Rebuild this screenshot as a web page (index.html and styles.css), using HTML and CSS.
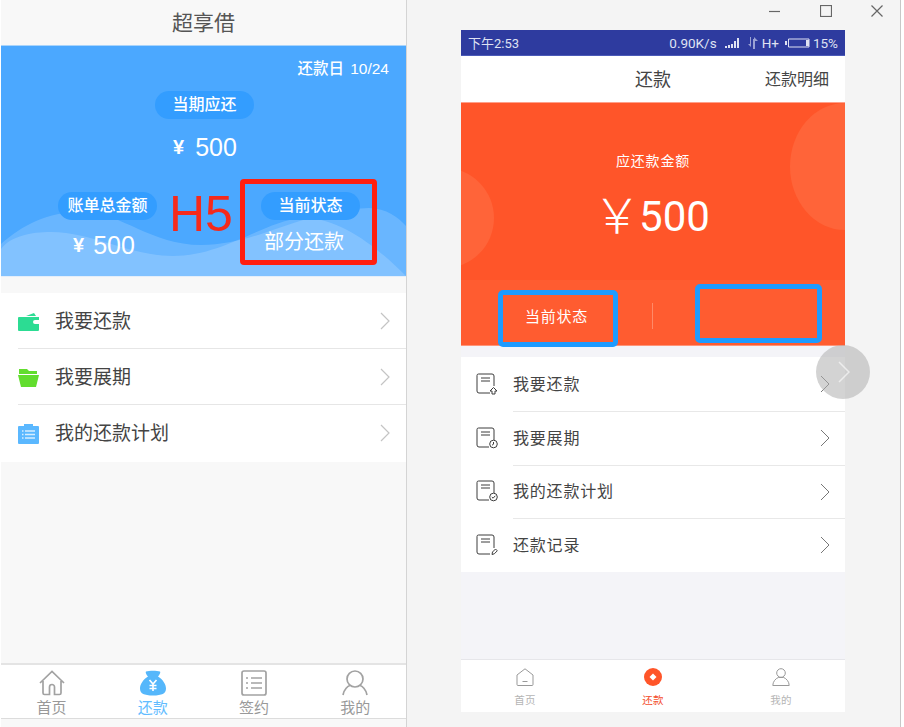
FILE: index.html
```html
<!DOCTYPE html>
<html lang="zh-CN">
<head>
<meta charset="utf-8">
<title>还款</title>
<link rel="stylesheet" href="styles.css">
</head>
<body>
<main class="compare">
  <section class="h5">
    <header class="h5-head">超享借</header>
    <div class="hero">
      <svg class="waves" viewBox="0 0 405 230" preserveAspectRatio="none" aria-hidden="true">
        <path class="wave" d="M0 198C22 178 50 165 82 166C122 167 150 199 200 199C258 199 300 164 368 162C385 162 398 172 405 180V230H0Z"/>
        <path class="wave" d="M0 203C10 190 30 186 50 186C90 186 130 210 172 210C222 210 262 176 300 172C340 170 380 205 405 230H0Z"/>
      </svg>
      <div class="hero-date">还款日 10/24</div>
      <div class="pill pill-main">当期应还</div>
      <div class="hero-amount"><span class="yen">¥</span>500</div>
      <div class="hero-row">
        <div class="hero-col">
          <div class="pill">账单总金额</div>
          <div class="sub-amount"><span class="yen yen-sub">¥</span>500</div>
        </div>
        <div class="hero-col hero-col-state">
          <div class="pill">当前状态</div>
          <div class="sub-state">部分还款</div>
        </div>
      </div>
    </div>
    <ul class="h5-list">
      <li class="h5-item">
        <svg class="h5-icon" viewBox="0 0 21 20"><path fill="#2cdc93" d="M1 5h20v3h-4a2 2 0 0 0 0 4h4v6a1 1 0 0 1-1 1H1a1 1 0 0 1-1-1V6a1 1 0 0 1 1-1zM8 4l8-3 2 3z"/></svg>
        <span class="h5-label">我要还款</span>
        <svg class="h5-chev" viewBox="0 0 10 18"><path d="M1 1l8 8-8 8"/></svg>
      </li>
      <li class="h5-item">
        <svg class="h5-icon" viewBox="0 0 21 20"><path fill="#62dd2e" d="M1 1h8l2 2h8v3H1zM0 7h21l-3 12H3z"/></svg>
        <span class="h5-label">我要展期</span>
        <svg class="h5-chev" viewBox="0 0 10 18"><path d="M1 1l8 8-8 8"/></svg>
      </li>
      <li class="h5-item">
        <svg class="h5-icon" viewBox="0 0 21 20"><path fill="#5bb8ff" d="M1 2h5V0h9v2h5a1 1 0 0 1 1 1v16a1 1 0 0 1-1 1H1a1 1 0 0 1-1-1V3a1 1 0 0 1 1-1z"/><path stroke="#d6edff" stroke-width="1.300" d="M7 7h10M7 10.500h10M7 14h10M4 7h1.500M4 10.500h1.500M4 14h1.500"/></svg>
        <span class="h5-label">我的还款计划</span>
        <svg class="h5-chev" viewBox="0 0 10 18"><path d="M1 1l8 8-8 8"/></svg>
      </li>
    </ul>
    <nav class="h5-tabs">
      <div class="h5-tab">
        <svg viewBox="0 0 26 26" class="h5-tabicon"><path d="M1 13L13 1.500 25 13M4 11v12a1.500 1.500 0 0 0 1.500 1.500h5V17a2.500 2.500 0 0 1 5 0v7.500h5A1.500 1.500 0 0 0 22 23V11"/></svg>
        <span>首页</span>
      </div>
      <div class="h5-tab h5-tab-on">
        <svg viewBox="0 0 26 26" class="h5-tabicon-fill"><path fill="#55b7fb" d="M6 1.500C9 .5 17 .5 20 1.500c1 1-1 4-2 5 5 3 8 8 8 12 0 5-4 7-13 7S0 23.500 0 18.500c0-4 3-9 8-12-1-1-3-4-2-5z"/><path stroke="#fff" stroke-width="1.600" fill="none" d="M9.500 10l3.500 4 3.500-4M13 14v7M9.500 15.500h7M9.500 18.500h7"/></svg>
        <span>还款</span>
      </div>
      <div class="h5-tab">
        <svg viewBox="0 0 26 26" class="h5-tabicon"><rect x="1" y="1" width="24" height="24" rx="2"/><path d="M10 8h11M10 13h11M10 18h11M5 8h2M5 13h2M5 18h2"/></svg>
        <span>签约</span>
      </div>
      <div class="h5-tab">
        <svg viewBox="0 0 26 26" class="h5-tabicon"><circle cx="13" cy="9" r="8"/><path d="M1 25c1-6 5-9 7-9.500M25 25c-1-6-5-9-7-9.500"/></svg>
        <span>我的</span>
      </div>
    </nav>
  </section>

  <section class="native">
    <div class="winbar">
      <svg class="winicon" viewBox="0 0 12 12"><path d="M0 6.500h11"/></svg>
      <svg class="winicon" viewBox="0 0 12 12"><rect x=".5" y=".5" width="11" height="11"/></svg>
      <svg class="winicon" viewBox="0 0 12 12"><path d="M.5.500l11 11M11.500.500l-11 11"/></svg>
    </div>
    <div class="phone">
      <div class="status">
        <span class="status-time">下午2:53</span>
        <span class="status-right">
          <span>0.90K/s</span>
          <svg class="sig" viewBox="0 0 16 10"><path d="M0 8h2v2H0zM3 7h2v3H3zM6 6h2v4H6zM9 3h2v7H9zM12 0h2v10h-2z"/></svg>
          <svg class="arrows" viewBox="0 0 10 12"><path d="M3 0v10L0 7h2V0zM5 2h1V0l4 4H7v8H5z"/></svg>
          <span>H+</span>
          <svg class="batt" viewBox="0 0 25 10"><path fill="none" stroke="#dfe2f2" d="M3.500 1h20.500v8H3.500z"/><path d="M0 3h2v4H0zM21 2h3v6h-3z"/></svg>
          <span>15%</span>
        </span>
      </div>
      <div class="navbar">
        <span class="nav-title">还款</span>
        <span class="nav-link">还款明细</span>
      </div>
      <div class="due">
        <i class="blob blob-r"></i>
        <i class="blob blob-l"></i>
        <div class="due-main">
          <div class="due-label">应还款金额</div>
          <div class="due-amount"><span class="due-yen">￥</span>500</div>
        </div>
        <div class="due-foot">
          <div class="due-cell">当前状态</div>
          <div class="due-cell due-cell-r"></div>
        </div>
      </div>
      <ul class="n-list">
        <li class="n-item">
          <svg class="n-icon" viewBox="0 0 22 22"><path d="M14 20H3a2 2 0 0 1-2-2V2.500A1.500 1.500 0 0 1 2.500 1H16a2 2 0 0 1 2 2v10M5 5h9M5 8h9"/><path d="M14 18l3.500-3.500L21 18h-2v3h-3v-3z"/></svg>
          <span class="n-label">我要还款</span>
          <svg class="n-chev" viewBox="0 0 10 18"><path d="M1 1l8 8-8 8"/></svg>
        </li>
        <li class="n-item">
          <svg class="n-icon" viewBox="0 0 22 22"><path d="M13 20H3a2 2 0 0 1-2-2V2.500A1.500 1.500 0 0 1 2.500 1H16a2 2 0 0 1 2 2v10M5 5h9M5 8h9"/><circle cx="17.500" cy="17" r="3.800"/><path d="M17.500 15v2.200l-1.500 1"/></svg>
          <span class="n-label">我要展期</span>
          <svg class="n-chev" viewBox="0 0 10 18"><path d="M1 1l8 8-8 8"/></svg>
        </li>
        <li class="n-item">
          <svg class="n-icon" viewBox="0 0 22 22"><path d="M13 20H3a2 2 0 0 1-2-2V2.500A1.500 1.500 0 0 1 2.500 1H16a2 2 0 0 1 2 2v10M5 5h9M5 8h9"/><circle cx="17.500" cy="17" r="3.800"/><path d="M15.800 17l1.300 1.200 2.200-2.400"/></svg>
          <span class="n-label">我的还款计划</span>
          <svg class="n-chev" viewBox="0 0 10 18"><path d="M1 1l8 8-8 8"/></svg>
        </li>
        <li class="n-item">
          <svg class="n-icon" viewBox="0 0 22 22"><path d="M14 20H3a2 2 0 0 1-2-2V2.500A1.500 1.500 0 0 1 2.500 1H16a2 2 0 0 1 2 2v11M5 5h9M5 8h9"/><path d="M16 20.500l.5-2.500 3-3 1.800 1.800-3 3z"/></svg>
          <span class="n-label">还款记录</span>
          <svg class="n-chev" viewBox="0 0 10 18"><path d="M1 1l8 8-8 8"/></svg>
        </li>
      </ul>
      <nav class="n-tabs">
        <div class="n-tab">
          <svg class="n-tabicon" viewBox="0 0 18 18"><path d="M1 7l8-6.200L17 7v9.500a1 1 0 0 1-1 1H2a1 1 0 0 1-1-1zM6.500 13.500h5"/></svg>
          <span>首页</span>
        </div>
        <div class="n-tab n-tab-on">
          <svg class="n-tabdot" viewBox="0 0 18 18"><circle cx="9" cy="9" r="9" fill="#ff5529"/><path fill="#fff" d="M9 5.500L12.500 9 9 12.500 5.500 9z"/></svg>
          <span>还款</span>
        </div>
        <div class="n-tab">
          <svg class="n-tabicon" viewBox="0 0 18 18"><circle cx="9" cy="5" r="4.300"/><path d="M.8 17.500c0-4 3-7 5.500-8h5.400c2.500 1 5.500 4 5.500 8z"/></svg>
          <span>我的</span>
        </div>
      </nav>
    </div>
  </section>

  <div class="h5-mark">H5</div>
  <div class="mark mark-red"></div>
  <div class="mark mark-blue-a"></div>
  <div class="mark mark-blue-b"></div>
  <div class="float-next">
    <svg viewBox="0 0 12 22"><path d="M1 1l10 10L1 21"/></svg>
  </div>
</main>
</body>
</html>
```

FILE: styles.css
```css
* { box-sizing: border-box; }
html, body { margin: 0; padding: 0; background: #fff; }
body { font-family: "Liberation Sans", "Noto Sans CJK SC", sans-serif; }
ul { list-style: none; margin: 0; padding: 0; }

.compare { position: relative; display: flex; width: 904px; height: 727px; overflow: hidden; padding-left: 1px; }

/* left: H5 page */
.h5 { width: 406px; height: 727px; background: #f8f8f8; border-right: 1px solid #d4d4d4; display: flex; flex-direction: column; }
.h5-head { height: 46px; line-height: 42px; text-align: center; font-size: 21px; color: #555; border-bottom: 1px solid #a9d4fb; font-family: "Noto Sans CJK SC", sans-serif; }
.hero { position: relative; height: 231px; background: #4ba8ff; color: #fff; display: flex; flex-direction: column; align-items: center; border-bottom: 1px solid #e4eefa; }
.waves { position: absolute; left: 0; top: 0; width: 100%; height: 100%; }
.wave { fill: #fff; fill-opacity: .17; }
.hero > *:not(.waves) { position: relative; }
.hero-date { align-self: flex-end; margin: 13px 17px 0 0; height: 20px; line-height: 20px; font-size: 15.500px; font-weight: 500; word-spacing: 2px; }
.pill { width: 99px; height: 28px; line-height: 28px; border-radius: 14px; background: #339dff; text-align: center; font-size: 16px; font-weight: 500; color: #fff; white-space: nowrap; }
.pill-main { margin: 12px 0 0 2px; }
.hero-amount { margin-top: 12px; height: 32px; line-height: 32px; font-size: 25px; display: flex; align-items: center; margin-left: 3px; }
.yen { font-size: 20px; font-weight: 700; margin-right: 11px; }
.yen-sub { margin-right: 9px; }
.hero-row { display: flex; align-self: flex-start; margin: 29px 0 0 57px; gap: 104px; }
.hero-col { width: 99px; display: flex; flex-direction: column; }
.sub-amount { margin: 9px 0 0 15px; height: 32px; line-height: 32px; font-size: 25px; display: flex; align-items: center; }
.sub-state { margin: 6px 0 0 3px; height: 32px; line-height: 32px; font-size: 20px; white-space: nowrap; }

.h5-list { margin-top: 16px; background: #fff; }
.h5-item { display: flex; align-items: center; height: 56.200px; margin-left: 17px; border-bottom: 1px solid #e6e6e6; position: relative; }
.h5-item:last-child { border-bottom: 0; }
.h5-icon { width: 21px; height: 20px; margin-top: 2px; }
.h5-label { margin: -3px 0 0 16px; font-size: 19px; color: #444; }
.h5-chev { position: absolute; right: 16px; top: 19px; width: 10px; height: 18px; fill: none; stroke: #c4c4c4; stroke-width: 1.200; }

.h5-tabs { margin-top: auto; margin-bottom: 8px; height: 56px; background: #fff; border-top: 2px solid #e4e4e4; border-bottom: 1px solid #dcdcdc; display: grid; grid-template-columns: repeat(4, 1fr); }
.h5-tab { display: flex; flex-direction: column; align-items: center; font-size: 15px; color: #999; line-height: 18px; padding-top: 5px; }
.h5-tab-on { color: #62bcff; }
.h5-tabicon, .h5-tabicon-fill { width: 26px; height: 26px; margin-bottom: 3px; }
.h5-tabicon { fill: none; stroke: #a2a2a2; stroke-width: 1.700; }

/* right: native page */
.native { width: 494px; height: 727px; background: #f4f4f4; border-right: 1px solid #c8c8c8; padding-left: 54px; display: flex; flex-direction: column; }
.winbar { height: 30px; display: flex; width: 439px; padding: 5px 0 0 308px; gap: 39px; }
.winicon { width: 12px; height: 12px; fill: none; stroke: #666; stroke-width: 1.200; }
.phone { width: 384px; height: 682px; background: #f4f4f8; display: flex; flex-direction: column; }
.status { height: 26px; background: #2e3b9f; border-bottom: 1px solid #4b5ab8; color: #dfe2f2; display: flex; justify-content: space-between; align-items: center; padding: 0 7px; font-size: 13.500px; font-family: "Roboto", "Noto Sans CJK SC", sans-serif; }
.status-time { font-size: 13px; }
.status-right { display: flex; align-items: center; }
.sig { width: 16px; height: 10px; margin: 0 7px 0 8px; fill: #dfe2f2; }
.arrows { width: 10px; height: 12px; margin-right: 4px; fill: #9aa2d4; }
.batt { width: 25px; height: 10px; margin: 0 3px 0 6px; fill: #dfe2f2; }
.navbar { position: relative; height: 46px; background: #fff; display: flex; align-items: center; justify-content: center; font-family: "Noto Sans CJK SC", sans-serif; color: #444; padding-bottom: 2px; }
.nav-title { font-size: 18px; }
.nav-link { position: absolute; right: 16px; font-size: 16px; }
.due { position: relative; height: 244px; overflow: hidden; background: #ff5529; border-top: 1px solid #ffa08a; border-bottom: 1px solid #ff9478; color: #fff; display: flex; flex-direction: column; font-family: "Noto Sans CJK SC", sans-serif; }
.blob { position: absolute; background: #ff6439; border-radius: 50%; }
.blob-r { left: 329px; top: 0; width: 110px; height: 127px; }
.blob-l { left: -66px; top: 65px; width: 99px; height: 100px; }
.due-main { position: relative; flex: 1; display: flex; flex-direction: column; align-items: center; }
.due-label { margin-top: 46px; height: 22px; line-height: 22px; font-size: 14px; letter-spacing: .8px; }
.due-amount { margin-top: 24px; height: 44px; line-height: 44px; font-size: 42px; font-family: "Roboto", sans-serif; display: flex; align-items: center; margin-right: 3px; }
.due-yen { margin: -10px -2px 0 0; font-family: "Noto Sans CJK SC", sans-serif; font-weight: 300; font-size: 48px; }
.due-foot { position: relative; height: 65px; background: #ff5c30; display: flex; align-items: center; }
.due-cell { width: 193px; height: 26px; line-height: 26px; text-align: center; font-size: 15px; letter-spacing: .8px; border-right: 1px solid #ff8a68; margin-top: 6px; }
.due-cell-r { border-right: 0; }

.n-list { margin-top: 11px; background: #fff; }
.n-item { position: relative; display: flex; align-items: center; height: 53.750px; padding-left: 15px; }
.n-item + .n-item::before { content: ""; position: absolute; left: 52px; right: 0; top: 0; height: 1px; background: #e8e8e8; }
.n-icon { width: 22px; height: 22px; fill: none; stroke: #3c3c3c; stroke-width: 1; }
.n-label { margin: -2px 0 0 15px; font-size: 16px; letter-spacing: .8px; color: #444; font-family: "Noto Sans CJK SC", sans-serif; }
.n-chev { position: absolute; right: 15px; top: 18px; width: 10px; height: 18px; fill: none; stroke: #777; stroke-width: 1; }

.n-tabs { margin-top: auto; height: 53px; background: #fff; border-top: 1px solid #e6e6ea; display: grid; grid-template-columns: repeat(3, 1fr); }
.n-tab { display: flex; flex-direction: column; align-items: center; font-size: 10.500px; line-height: 14px; letter-spacing: .3px; color: #b5b5b5; padding-top: 8px; font-family: "Noto Sans CJK SC", sans-serif; }
.n-tab-on { color: #f4502f; }
.n-tabicon, .n-tabdot { width: 18px; height: 18px; margin-bottom: 7px; }
.n-tabicon { fill: none; stroke: #999; stroke-width: 1; }

/* annotations drawn over the screenshots */
.h5-mark { position: absolute; left: 169px; top: 184px; font-size: 50px; line-height: 60px; color: #f52a1c; }
.mark { position: absolute; }
.mark-red { left: 240px; top: 179px; width: 137px; height: 86px; border: 5px solid #ff1f10; border-radius: 4px; }
.mark-blue-a { left: 498px; top: 290px; width: 120px; height: 57px; border: 5px solid #1e9bff; border-radius: 5px; }
.mark-blue-b { left: 695px; top: 284px; width: 127px; height: 59px; border: 5px solid #1e9bff; border-radius: 5px; }
.float-next { position: absolute; left: 816px; top: 345px; width: 54px; height: 54px; border-radius: 50%; background: rgba(175, 175, 175, .55); display: flex; align-items: center; justify-content: center; }
.float-next svg { width: 12px; height: 22px; fill: none; stroke: rgba(255, 255, 255, .6); stroke-width: 1.500; margin-left: 2px; }
```
